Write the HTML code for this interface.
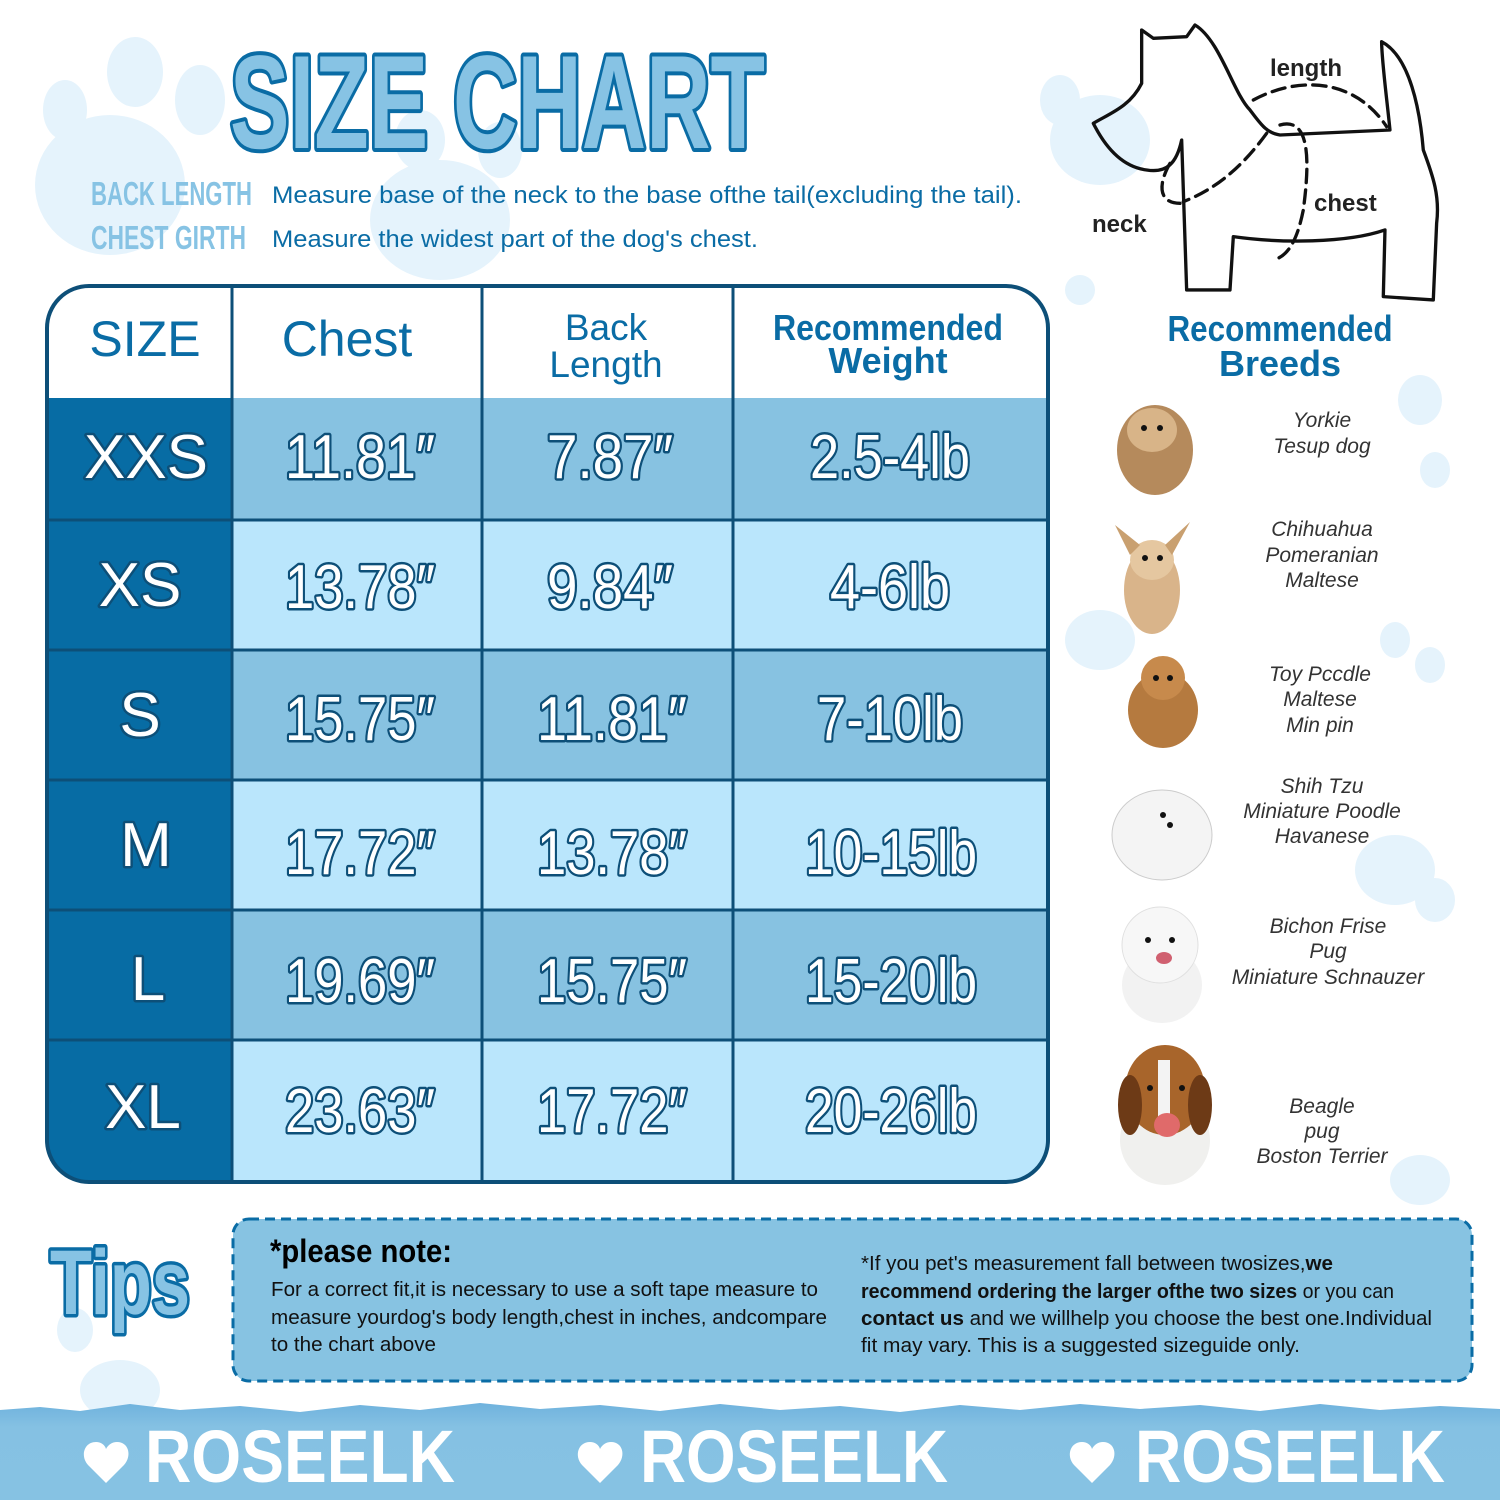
<!DOCTYPE html>
<html><head><meta charset="utf-8"><style>
html,body{margin:0;padding:0;background:#fff;}
svg{display:block;}
</style></head><body>
<svg width="1500" height="1500" viewBox="0 0 1500 1500" xmlns="http://www.w3.org/2000/svg" font-family="Liberation Sans, sans-serif">
<defs>
<clipPath id="tc"><rect x="47" y="286" width="1001" height="896" rx="42"/></clipPath>
<linearGradient id="band" x1="0" y1="0" x2="0" y2="1"><stop offset="0" stop-color="#6fb2dd"/><stop offset="0.25" stop-color="#85c1e3"/><stop offset="1" stop-color="#86c2e3"/></linearGradient>
</defs>
<!-- background paws -->
<g fill="#e5f3fc">
<ellipse cx="110" cy="185" rx="75" ry="70"/><ellipse cx="65" cy="110" rx="22" ry="30"/><ellipse cx="135" cy="72" rx="28" ry="35"/><ellipse cx="200" cy="100" rx="25" ry="35"/>
<ellipse cx="440" cy="220" rx="70" ry="60"/><ellipse cx="420" cy="140" rx="25" ry="30"/><ellipse cx="500" cy="150" rx="22" ry="28"/>
<ellipse cx="1100" cy="140" rx="50" ry="45"/><ellipse cx="1060" cy="100" rx="20" ry="25"/>
<ellipse cx="1420" cy="400" rx="22" ry="25"/><ellipse cx="1395" cy="640" rx="15" ry="18"/><ellipse cx="1430" cy="665" rx="15" ry="18"/>
<ellipse cx="1395" cy="870" rx="40" ry="35"/><ellipse cx="1435" cy="900" rx="20" ry="22"/><ellipse cx="1435" cy="470" rx="15" ry="18"/>
<ellipse cx="1100" cy="640" rx="35" ry="30"/><ellipse cx="1080" cy="290" rx="15" ry="15"/>
<ellipse cx="1420" cy="1180" rx="30" ry="25"/><ellipse cx="120" cy="1390" rx="40" ry="30"/><ellipse cx="75" cy="1330" rx="18" ry="22"/>
</g>
<!-- title -->
<text x="230" y="148" font-size="133" font-weight="bold" textLength="535" lengthAdjust="spacingAndGlyphs" fill="#87c3e4" stroke="#0a6ca5" stroke-width="8" paint-order="stroke" stroke-linejoin="round">SIZE CHART</text>
<text x="91" y="205" font-size="33" font-weight="bold" textLength="161" lengthAdjust="spacingAndGlyphs" fill="#87c3e4">BACK LENGTH</text>
<text x="91" y="249" font-size="33" font-weight="bold" textLength="155" lengthAdjust="spacingAndGlyphs" fill="#87c3e4">CHEST GIRTH</text>
<text x="272" y="203" font-size="24" textLength="750" lengthAdjust="spacingAndGlyphs" fill="#0a6ca5">Measure base of the neck to the base ofthe tail(excluding the tail).</text>
<text x="272" y="247" font-size="24" textLength="486" lengthAdjust="spacingAndGlyphs" fill="#0a6ca5">Measure the widest part of the dog's chest.</text>

<!-- table -->
<g clip-path="url(#tc)">
<rect x="47" y="286" width="1001" height="112" fill="#fff"/>
<rect x="232" y="398" width="816" height="122" fill="#87c2e1"/>
<rect x="232" y="520" width="816" height="130" fill="#bae6fc"/>
<rect x="232" y="650" width="816" height="130" fill="#87c2e1"/>
<rect x="232" y="780" width="816" height="130" fill="#bae6fc"/>
<rect x="232" y="910" width="816" height="130" fill="#87c2e1"/>
<rect x="232" y="1040" width="816" height="142" fill="#bae6fc"/>
<rect x="47" y="398" width="185" height="784" fill="#076ca4"/>
</g>
<g stroke="#0d4f78" stroke-width="3">
<line x1="232" y1="286" x2="232" y2="1182"/><line x1="482" y1="286" x2="482" y2="1182"/><line x1="733" y1="286" x2="733" y2="1182"/>
<line x1="47" y1="520" x2="1048" y2="520"/><line x1="47" y1="650" x2="1048" y2="650"/><line x1="47" y1="780" x2="1048" y2="780"/><line x1="47" y1="910" x2="1048" y2="910"/><line x1="47" y1="1040" x2="1048" y2="1040"/>
</g>
<rect x="47" y="286" width="1001" height="896" rx="42" fill="none" stroke="#0d4f78" stroke-width="4"/>
<g fill="#0a6ca5" text-anchor="middle">
<text x="145" y="356" font-size="50">SIZE</text>
<text x="347" y="356" font-size="50">Chest</text>
<text x="606" y="340" font-size="37">Back</text>
<text x="606" y="377" font-size="37">Length</text>
<text x="888" y="340" font-size="36" font-weight="bold" textLength="230" lengthAdjust="spacingAndGlyphs">Recommended</text>
<text x="888" y="373" font-size="36" font-weight="bold">Weight</text>
</g>
<g fill="#fff" stroke="#0d4f78" stroke-width="5" paint-order="stroke" stroke-linejoin="round" text-anchor="middle" font-size="62">
<text x="146" y="478">XXS</text><text x="140" y="606">XS</text><text x="140" y="736">S</text><text x="146" y="866">M</text><text x="148" y="1000">L</text><text x="143" y="1128">XL</text>
</g>
<g fill="#fff" stroke="#0d4f78" stroke-width="5" paint-order="stroke" stroke-linejoin="round" font-size="62" lengthAdjust="spacingAndGlyphs">
<text x="285" y="478" textLength="150" lengthAdjust="spacingAndGlyphs">11.81″</text>
<text x="547" y="478" textLength="126" lengthAdjust="spacingAndGlyphs">7.87″</text>
<text x="810" y="478" textLength="160" lengthAdjust="spacingAndGlyphs">2.5-4lb</text>
<text x="285" y="608" textLength="150" lengthAdjust="spacingAndGlyphs">13.78″</text>
<text x="547" y="608" textLength="126" lengthAdjust="spacingAndGlyphs">9.84″</text>
<text x="830" y="608" textLength="120" lengthAdjust="spacingAndGlyphs">4-6lb</text>
<text x="285" y="740" textLength="150" lengthAdjust="spacingAndGlyphs">15.75″</text>
<text x="537" y="740" textLength="150" lengthAdjust="spacingAndGlyphs">11.81″</text>
<text x="817" y="740" textLength="146" lengthAdjust="spacingAndGlyphs">7-10lb</text>
<text x="285" y="874" textLength="150" lengthAdjust="spacingAndGlyphs">17.72″</text>
<text x="537" y="874" textLength="150" lengthAdjust="spacingAndGlyphs">13.78″</text>
<text x="805" y="874" textLength="172" lengthAdjust="spacingAndGlyphs">10-15lb</text>
<text x="285" y="1002" textLength="150" lengthAdjust="spacingAndGlyphs">19.69″</text>
<text x="537" y="1002" textLength="150" lengthAdjust="spacingAndGlyphs">15.75″</text>
<text x="805" y="1002" textLength="172" lengthAdjust="spacingAndGlyphs">15-20lb</text>
<text x="285" y="1132" textLength="150" lengthAdjust="spacingAndGlyphs">23.63″</text>
<text x="537" y="1132" textLength="150" lengthAdjust="spacingAndGlyphs">17.72″</text>
<text x="805" y="1132" textLength="172" lengthAdjust="spacingAndGlyphs">20-26lb</text>
</g>

<!-- dog outline -->
<g transform="translate(1080,10) scale(0.3333)" fill="none" stroke="#111" stroke-width="10" stroke-linejoin="round" stroke-linecap="round">
<path d="M40 340 C90 310,150 290,185 220 L185 60 L220 85 L320 80 L345 45 C420 90,460 250,510 300 C540 340,560 370,600 375 L930 360 C920 260,905 150,905 95 C990 140,1020 300,1030 420 C1060 500,1080 560,1070 640 L1060 870 L910 860 L915 660 C800 700,600 700,460 680 L450 840 L320 840 L305 390 C290 460,260 490,200 480 C120 470,70 400,40 340 Z"/>
<g stroke-dasharray="40 22">
<path d="M520 270 C650 200,820 200,920 350"/>
<path d="M600 345 C690 320,690 450,670 600 C650 700,620 740,580 750"/>
<path d="M560 370 C480 480,400 540,310 575"/>
<path d="M270 460 C230 530,240 580,300 580"/>
</g>
</g>
<g font-size="24" font-weight="bold" fill="#222">
<text x="1270" y="76">length</text><text x="1314" y="211">chest</text><text x="1092" y="232">neck</text>
</g>
<!-- recommended breeds -->
<g fill="#0a6ca5" font-weight="bold" font-size="36" text-anchor="middle">
<text x="1280" y="341" textLength="225" lengthAdjust="spacingAndGlyphs">Recommended</text>
<text x="1280" y="376">Breeds</text>
</g>
<g fill="#333" font-style="italic" font-size="21" text-anchor="middle">
<text x="1322" y="427">Yorkie</text><text x="1322" y="453">Tesup dog</text>
<text x="1322" y="536">Chihuahua</text><text x="1322" y="562">Pomeranian</text><text x="1322" y="587">Maltese</text>
<text x="1320" y="681">Toy Pccdle</text><text x="1320" y="706">Maltese</text><text x="1320" y="732">Min pin</text>
<text x="1322" y="793">Shih Tzu</text><text x="1322" y="818">Miniature Poodle</text><text x="1322" y="843">Havanese</text>
<text x="1328" y="933">Bichon Frise</text><text x="1328" y="958">Pug</text><text x="1328" y="984">Miniature Schnauzer</text>
<text x="1322" y="1113">Beagle</text><text x="1322" y="1138">pug</text><text x="1322" y="1163">Boston Terrier</text>
</g>
<!-- dog photos (stylized) -->
<g>
<ellipse cx="1155" cy="450" rx="38" ry="45" fill="#b58a5c"/><ellipse cx="1152" cy="430" rx="25" ry="22" fill="#d8b488"/><circle cx="1144" cy="428" r="3" fill="#111"/><circle cx="1160" cy="428" r="3" fill="#111"/>
<ellipse cx="1152" cy="590" rx="28" ry="44" fill="#d9b48a"/><ellipse cx="1152" cy="560" rx="22" ry="20" fill="#e5c7a0"/><path d="M1130 555 L1115 525 L1140 545 Z M1172 555 L1190 522 L1165 545 Z" fill="#c9a070"/><circle cx="1145" cy="558" r="3" fill="#111"/><circle cx="1160" cy="558" r="3" fill="#111"/>
<ellipse cx="1163" cy="710" rx="35" ry="38" fill="#b57a3f"/><circle cx="1163" cy="678" r="22" fill="#c78a4c"/><circle cx="1156" cy="678" r="3" fill="#111"/><circle cx="1170" cy="678" r="3" fill="#111"/>
<ellipse cx="1162" cy="835" rx="50" ry="45" fill="#f4f4f4" stroke="#ccc"/><circle cx="1163" cy="815" r="3" fill="#111"/><circle cx="1170" cy="825" r="3" fill="#111"/>
<ellipse cx="1162" cy="985" rx="40" ry="38" fill="#f2f2f2"/><circle cx="1160" cy="945" r="38" fill="#f7f7f7" stroke="#e0e0e0"/><circle cx="1148" cy="940" r="3" fill="#111"/><circle cx="1172" cy="940" r="3" fill="#111"/><ellipse cx="1164" cy="958" rx="8" ry="6" fill="#d06070"/>
<ellipse cx="1165" cy="1140" rx="45" ry="45" fill="#f0f0ee"/><ellipse cx="1165" cy="1090" rx="40" ry="45" fill="#a8652b"/><ellipse cx="1130" cy="1105" rx="12" ry="30" fill="#6d3a16"/><ellipse cx="1200" cy="1105" rx="12" ry="30" fill="#6d3a16"/><rect x="1158" y="1060" width="12" height="60" fill="#f3f3f3"/><ellipse cx="1167" cy="1125" rx="13" ry="12" fill="#e06a6a"/><circle cx="1150" cy="1088" r="3" fill="#111"/><circle cx="1182" cy="1088" r="3" fill="#111"/>
</g>

<!-- tips -->
<text x="50" y="1314" font-size="92" font-weight="bold" textLength="140" lengthAdjust="spacingAndGlyphs" fill="#87c3e4" stroke="#0a6ca5" stroke-width="7" paint-order="stroke" stroke-linejoin="round">Tips</text>
<rect x="233" y="1219" width="1239" height="162" rx="16" fill="#87c3e2" stroke="#0a6ca5" stroke-width="3" stroke-dasharray="10 6"/>
<text x="270" y="1262" font-size="32" font-weight="bold" textLength="182" lengthAdjust="spacingAndGlyphs" fill="#000">*please note:</text>
<g font-size="20" fill="#111">
<text x="271" y="1296" textLength="547" lengthAdjust="spacingAndGlyphs">For a correct fit,it is necessary to use a soft tape measure to</text>
<text x="271" y="1324" textLength="556" lengthAdjust="spacingAndGlyphs">measure yourdog's body length,chest in inches, andcompare</text>
<text x="271" y="1351" textLength="165" lengthAdjust="spacingAndGlyphs">to the chart above</text>
<text x="861" y="1270" textLength="472" lengthAdjust="spacingAndGlyphs">*If you pet's measurement fall between twosizes,<tspan font-weight="bold">we</tspan></text>
<text x="861" y="1298" textLength="533" lengthAdjust="spacingAndGlyphs"><tspan font-weight="bold">recommend ordering the larger ofthe two sizes</tspan> or you can</text>
<text x="861" y="1325" textLength="571" lengthAdjust="spacingAndGlyphs"><tspan font-weight="bold">contact us</tspan> and we willhelp you choose the best one.Individual</text>
<text x="861" y="1352" textLength="439" lengthAdjust="spacingAndGlyphs">fit may vary. This is a suggested sizeguide only.</text>
</g>

<!-- bottom band -->
<path d="M0 1410 L40 1407 L80 1411 L130 1404 L180 1410 L240 1406 L300 1412 L360 1405 L420 1410 L480 1403 L540 1409 L600 1405 L660 1411 L720 1404 L780 1410 L840 1406 L900 1412 L960 1405 L1020 1410 L1080 1404 L1140 1409 L1200 1405 L1260 1411 L1320 1404 L1380 1410 L1440 1406 L1500 1409 L1500 1500 L0 1500 Z" fill="url(#band)"/>
<g fill="#fff">
<path id="h" d="M106 1483 L88 1465 C80 1456,84 1442,96 1442 C101 1442,105 1445,106 1449 C108 1445,112 1442,117 1442 C129 1442,132 1456,124 1465 Z"/>
<path d="M106 1483 L88 1465 C80 1456,84 1442,96 1442 C101 1442,105 1445,106 1449 C108 1445,112 1442,117 1442 C129 1442,132 1456,124 1465 Z" transform="translate(494,0)"/>
<path d="M106 1483 L88 1465 C80 1456,84 1442,96 1442 C101 1442,105 1445,106 1449 C108 1445,112 1442,117 1442 C129 1442,132 1456,124 1465 Z" transform="translate(986,0)"/>
<g font-size="74" font-weight="bold">
<text x="145" y="1482" textLength="310" lengthAdjust="spacingAndGlyphs">ROSEELK</text>
<text x="640" y="1482" textLength="308" lengthAdjust="spacingAndGlyphs">ROSEELK</text>
<text x="1135" y="1482" textLength="310" lengthAdjust="spacingAndGlyphs">ROSEELK</text>
</g>
</g>
</svg>
</body></html>
